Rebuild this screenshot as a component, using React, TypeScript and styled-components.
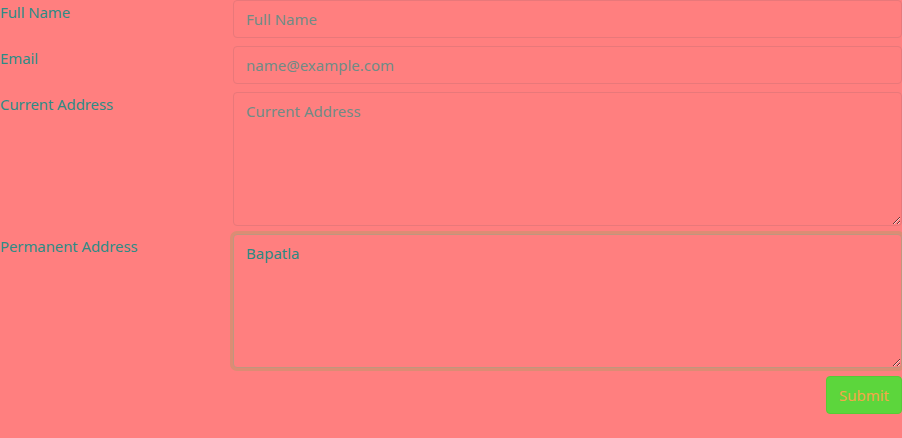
import React from "react";
import styled, { createGlobalStyle } from "styled-components";

const Global = createGlobalStyle`
  html, body {
    margin: 0;
    padding: 0;
    background: #ff7f7f;
  }
  body {
    font-family: "Noto Sans", "Open Sans", sans-serif;
    font-size: 15px;
    line-height: 24px;
    color: #2b8a83;
    overflow: hidden;
  }
  * { box-sizing: border-box; }
`;

const Form = styled.form`
  display: grid;
  grid-template-columns: 233px 1fr;
  row-gap: 8px;
  width: 902px;
`;

const Label = styled.label`
  display: block;
  color: #2e8c86;
  letter-spacing: -0.1px;
`;

const fieldBase = `
  display: block;
  width: 100%;
  font-family: inherit;
  font-size: 15px;
  line-height: 24px;
  color: #2b8a83;
  background: #ff7f7f;
  border: 1px solid #e8787a;
  border-radius: 4px;
  padding: 6px 12px;
  margin: 0;
  caret-color: #2b8a83;
  &::placeholder { color: #6f8c86; opacity: 1; }
  &:focus {
    outline: none;
    border-color: #c0967e;
    box-shadow: 0 0 0 3px #dc8c74;
  }
`;

const Input = styled.input`
  ${fieldBase}
  height: 38px;
`;

const TextArea = styled.textarea`
  ${fieldBase}
  height: 134px;
  resize: vertical;
`;

const Actions = styled.div`
  grid-column: 1 / -1;
  display: flex;
  justify-content: flex-end;
`;

const Button = styled.button`
  font-family: inherit;
  font-size: 15px;
  line-height: 24px;
  height: 38px;
  padding: 6px 12px;
  background: #5cd63c;
  color: #f5a54a;
  border: 1px solid #56cc36;
  border-radius: 4px;
  cursor: pointer;
`;

export default function App() {
  return (
    <>
      <Global />
      <Form onSubmit={(e) => e.preventDefault()}>
        <Label htmlFor="name">Full Name</Label>
        <Input id="name" type="text" placeholder="Full Name" />
        <Label htmlFor="email">Email</Label>
        <Input id="email" type="email" placeholder="name@example.com" />
        <Label htmlFor="cur">Current Address</Label>
        <TextArea id="cur" placeholder="Current Address" />
        <Label htmlFor="perm">Permanent Address</Label>
        <TextArea id="perm" defaultValue="Bapatla" autoFocus />
        <Actions>
          <Button type="submit">Submit</Button>
        </Actions>
      </Form>
    </>
  );
}
